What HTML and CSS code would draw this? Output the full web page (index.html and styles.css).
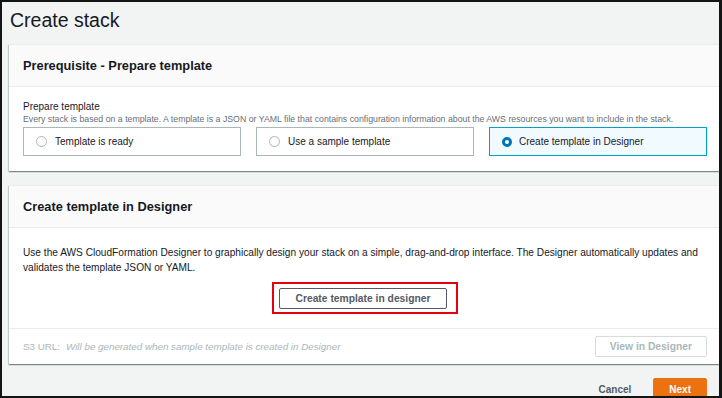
FILE: index.html
```html
<!DOCTYPE html>
<html lang="en">
<head>
    <meta charset="UTF-8">
    <meta name="viewport" content="width=device-width, initial-scale=1.0">
    <title>Create stack</title>
    <link rel="stylesheet" href="styles.css">
</head>
<body>
    <div class="frame">
        <h1 class="page-title">Create stack</h1>

        <section class="panel">
            <div class="panel-header">
                <h2 class="panel-title">Prerequisite - Prepare template</h2>
            </div>
            <div class="panel-body">
                <div class="field-label">Prepare template</div>
                <div class="field-desc">Every stack is based on a template. A template is a JSON or YAML file that contains configuration information about the AWS resources you want to include in the stack.</div>
                <div class="tiles">
                    <label class="tile"><span class="radio"></span>Template is ready</label>
                    <label class="tile"><span class="radio"></span>Use a sample template</label>
                    <label class="tile tile-selected"><span class="radio radio-checked"></span>Create template in Designer</label>
                </div>
            </div>
        </section>

        <section class="panel">
            <div class="panel-header">
                <h2 class="panel-title">Create template in Designer</h2>
            </div>
            <div class="panel-body designer-body">
                <p class="designer-text">Use the AWS CloudFormation Designer to graphically design your stack on a simple, drag-and-drop interface. The Designer automatically updates and validates the template JSON or YAML.</p>
                <div class="designer-action">
                    <span class="highlight">
                        <button type="button" class="btn">Create template in designer</button>
                    </span>
                </div>
            </div>
            <div class="panel-footer">
                <span class="s3-label">S3 URL:</span>
                <span class="s3-value">Will be generated when sample template is created in Designer</span>
                <button type="button" class="btn btn-disabled">View in Designer</button>
            </div>
        </section>

        <div class="actions">
            <button type="button" class="link-btn">Cancel</button>
            <button type="button" class="btn btn-primary">Next</button>
        </div>
    </div>
</body>
</html>
```

FILE: styles.css
```css
body {
    margin: 0;
    padding: 0;
    font-family: "Liberation Sans", Arial, sans-serif;
    color: #16191f;
    overflow: hidden;
}
.frame {
    width: 722px;
    height: 398px;
    box-sizing: border-box;
    border: 2px solid #141414;
    border-right-width: 3px;
    background: #f2f3f3;
    overflow: hidden;
}
.page-title {
    margin: 0;
    padding: 6px 0 12px 8px;
    font-size: 19.5px;
    font-weight: normal;
    line-height: 24px;
}
.panel {
    margin-left: 7px;
    background: #fff;
    box-shadow: 0 1px 1px 0 rgba(0, 28, 36, 0.3), 1px 1px 1px 0 rgba(0, 28, 36, 0.15), -1px 1px 1px 0 rgba(0, 28, 36, 0.15);
    border-top: 1px solid #eaeded;
}
.panel + .panel {
    margin-top: 14px;
}
.panel-header {
    height: 41px;
    display: flex;
    align-items: center;
    padding: 0 12px 0 14px;
    background: #fafafa;
    border-bottom: 1px solid #eaeded;
}
.panel-title {
    margin: 0;
    font-size: 12.8px;
    font-weight: bold;
}
.panel-body {
    padding: 13px 12px 15px 14px;
}
.field-label {
    font-size: 10px;
    line-height: 13px;
}
.field-desc {
    font-size: 8.75px;
    line-height: 12px;
    color: #687078;
}
.tiles {
    margin-top: 2px;
    display: grid;
    grid-template-columns: repeat(3, 1fr);
    gap: 15px;
}
.tile {
    height: 29px;
    box-sizing: border-box;
    display: flex;
    align-items: center;
    padding-left: 12px;
    border: 1px solid #aab7b8;
    font-size: 10px;
}
.tile-selected {
    border-color: #00a1c9;
    background: #f1faff;
}
.radio {
    width: 9px;
    height: 9px;
    margin-right: 8px;
    border: 1px solid #aab7b8;
    border-radius: 50%;
    background: #fff;
}
.radio-checked {
    width: 4px;
    height: 4px;
    border: 3px solid #0073bb;
    margin-right: 7px;
}
.designer-body {
    padding-top: 17px;
    padding-bottom: 14px;
}
.designer-text {
    margin: 0;
    font-size: 10.15px;
    line-height: 15px;
}
.designer-action {
    margin-top: 7px;
    display: flex;
    justify-content: center;
}
.highlight {
    display: flex;
    padding: 4px 9px 3px 5px;
    border: 2px solid #e8000b;
}
.btn {
    height: 21px;
    padding: 0 15px;
    border: 1px solid #545b64;
    border-radius: 2px;
    background: #fff;
    color: #545b64;
    font-family: inherit;
    font-size: 10.3px;
    font-weight: bold;
}
.btn-disabled {
    margin-left: auto;
    padding: 0 14px;
    border-color: #d5dbdb;
    color: #aab7b8;
}
.btn-primary {
    height: 22px;
    font-size: 10px;
    border-color: #ec7211;
    background: #ec7211;
    color: #fff;
}
.panel-footer {
    display: flex;
    align-items: center;
    padding: 7px 12px 7px 14px;
    border-top: 1px solid #eaeded;
    font-size: 9.8px;
    color: #aab7b8;
}
.s3-value {
    margin-left: 6px;
    font-style: italic;
}
.actions {
    margin-top: 14px;
    display: flex;
    justify-content: flex-end;
    align-items: center;
    gap: 22px;
    padding-right: 12px;
}
.link-btn {
    padding: 0;
    border: none;
    background: none;
    color: #545b64;
    font-family: inherit;
    font-size: 10px;
    font-weight: bold;
}
```
